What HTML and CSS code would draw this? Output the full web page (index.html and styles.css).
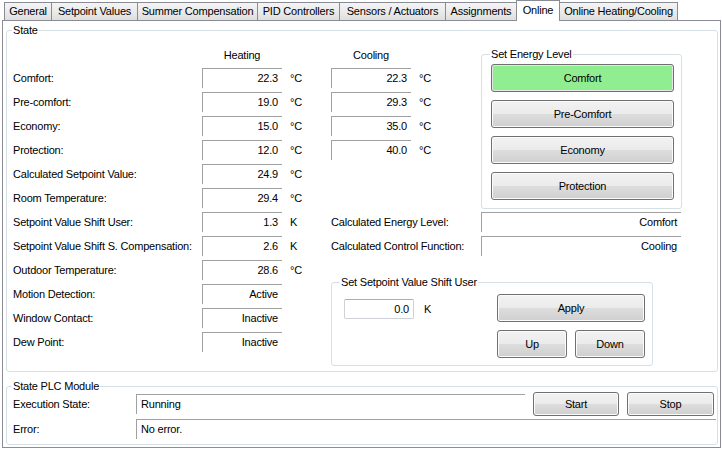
FILE: index.html
```html
<!DOCTYPE html>
<html>
<head>
<meta charset="utf-8">
<link rel="stylesheet" href="styles.css">
</head>
<body>
<div class="tabstrip">
  <div class="tab">General</div>
  <div class="tab">Setpoint Values</div>
  <div class="tab">Summer Compensation</div>
  <div class="tab">PID Controllers</div>
  <div class="tab">Sensors / Actuators</div>
  <div class="tab">Assignments</div>
  <div class="tab active">Online</div>
  <div class="tab">Online Heating/Cooling</div>
</div>
<div class="panel">
  <fieldset class="group state">
    <legend>State</legend>
    <div class="state-body">
      <div class="left">
        <div></div><div class="head">Heating</div><div></div>
        <div class="lbl">Comfort:</div><div class="val">22.3</div><div class="unit">°C</div>
        <div class="lbl">Pre-comfort:</div><div class="val">19.0</div><div class="unit">°C</div>
        <div class="lbl">Economy:</div><div class="val">15.0</div><div class="unit">°C</div>
        <div class="lbl">Protection:</div><div class="val">12.0</div><div class="unit">°C</div>
        <div class="lbl">Calculated Setpoint Value:</div><div class="val">24.9</div><div class="unit">°C</div>
        <div class="lbl">Room Temperature:</div><div class="val">29.4</div><div class="unit">°C</div>
        <div class="lbl">Setpoint Value Shift User:</div><div class="val">1.3</div><div class="unit">K</div>
        <div class="lbl">Setpoint Value Shift S. Compensation:</div><div class="val">2.6</div><div class="unit">K</div>
        <div class="lbl">Outdoor Temperature:</div><div class="val">28.6</div><div class="unit">°C</div>
        <div class="lbl">Motion Detection:</div><div class="val">Active</div><div></div>
        <div class="lbl">Window Contact:</div><div class="val">Inactive</div><div></div>
        <div class="lbl">Dew Point:</div><div class="val">Inactive</div><div></div>
      </div>
      <div class="right">
        <div class="top">
          <div class="cool">
            <div class="head">Cooling</div><div></div>
            <div class="val">22.3</div><div class="unit">°C</div>
            <div class="val">29.3</div><div class="unit">°C</div>
            <div class="val">35.0</div><div class="unit">°C</div>
            <div class="val">40.0</div><div class="unit">°C</div>
          </div>
          <fieldset class="group energy">
            <legend>Set Energy Level</legend>
            <div class="energy-btns">
              <div class="btn on">Comfort</div>
              <div class="btn">Pre-Comfort</div>
              <div class="btn">Economy</div>
              <div class="btn">Protection</div>
            </div>
          </fieldset>
        </div>
        <div class="calc first"><div class="lbl">Calculated Energy Level:</div><div class="val wide">Comfort</div></div>
        <div class="calc"><div class="lbl">Calculated Control Function:</div><div class="val wide">Cooling</div></div>
        <fieldset class="group shift">
          <legend>Set Setpoint Value Shift User</legend>
          <div class="shift-body">
            <div class="shift-input">
              <div class="tb">0.0</div><div class="k">K</div>
            </div>
            <div class="shift-btns">
              <div class="btn">Apply</div>
              <div class="updown">
                <div class="btn">Up</div>
                <div class="btn">Down</div>
              </div>
            </div>
          </div>
        </fieldset>
      </div>
    </div>
  </fieldset>
  <fieldset class="group plc">
    <legend>State PLC Module</legend>
    <div class="plc-row r1">
      <div class="lbl">Execution State:</div>
      <div class="val run">Running</div>
      <div class="btn start">Start</div>
      <div class="btn stop">Stop</div>
    </div>
    <div class="plc-row r2">
      <div class="lbl">Error:</div>
      <div class="val err">No error.</div>
    </div>
  </fieldset>
</div>
</body>
</html>
```
FILE: styles.css
```css
body {
  margin: 0;
  width: 722px;
  height: 450px;
  overflow: hidden;
  background: #fff;
  color: #000;
  font: 11px "Liberation Sans", Arial, sans-serif;
  letter-spacing: -0.2px;
}

.tabstrip {
  display: flex;
  align-items: flex-end;
  height: 20px;
  padding-left: 4px;
  position: relative;
  z-index: 1;
}
.tab {
  box-sizing: border-box;
  height: 18px;
  border: 1px solid #898c95;
  border-bottom: 0;
  margin-right: -1px;
  background: linear-gradient(#f4f4f4, #ebebeb 50%, #dedede);
  text-align: center;
  line-height: 16px;
  white-space: nowrap;
}
.tab:nth-child(1) { width: 48px; }
.tab:nth-child(2) { width: 87px; }
.tab:nth-child(3) { width: 121px; }
.tab:nth-child(4) { width: 83px; }
.tab:nth-child(5) { width: 107px; }
.tab:nth-child(6) { width: 72px; }
.tab:nth-child(7) { width: 44px; }
.tab:nth-child(8) { width: 119px; }
.tab.active {
  height: 21px;
  margin-bottom: -1px;
  background: #fff;
  line-height: 18px;
}

.panel {
  box-sizing: border-box;
  width: 719px;
  height: 428px;
  margin-left: 2px;
  border: 1px solid #898c95;
  padding: 2px 0 0 3px;
}

.group {
  box-sizing: border-box;
  margin: 0;
  min-width: 0;
  border: 1px solid #d5dfe5;
  border-radius: 3px;
  padding: 0;
}
.group legend {
  padding: 0 1px;
  margin-left: -1px;
  line-height: 14px;
}

.state {
  width: 712px;
  height: 349px;
  padding: 7px 0 0 6px;
}
.state-body { display: flex; }

.left {
  width: 318px;
  display: grid;
  grid-template-columns: 189px 80px auto;
  grid-auto-rows: 20px;
  row-gap: 4px;
  align-content: start;
}
.head { text-align: center; line-height: 22px; }
.lbl { line-height: 21px; white-space: nowrap; }
.val {
  box-sizing: border-box;
  height: 20px;
  border-top: 1px solid #a0a0a0;
  border-left: 1px solid #a0a0a0;
  text-align: right;
  padding-right: 4px;
  line-height: 19px;
  white-space: nowrap;
  overflow: hidden;
}
.unit { padding-left: 8px; line-height: 20px; }

.right { width: 386px; }
.top {
  display: flex;
  align-items: flex-start;
  height: 165px;
}
.cool {
  width: 150px;
  display: grid;
  grid-template-columns: 80px 70px;
  grid-auto-rows: 20px;
  row-gap: 4px;
}
.energy {
  width: 201px;
  height: 162px;
  margin-top: 3px;
  padding: 3px 0 0 9px;
}
.energy-btns {
  display: flex;
  flex-direction: column;
  gap: 8px;
}
.energy .btn { width: 183px; }

.btn {
  box-sizing: border-box;
  height: 28px;
  border: 1px solid #707070;
  border-radius: 3px;
  background: linear-gradient(#f2f2f2, #ebebeb 50%, #dddddd 51%, #cfcfcf);
  box-shadow: inset 0 0 0 1px #fbfbfb;
  display: flex;
  align-items: center;
  justify-content: center;
  white-space: nowrap;
}
.btn.on {
  background: #90ee90;
  box-shadow: inset 0 0 0 1px #e6e6e6;
}

.calc { display: flex; height: 20px; margin-top: 4px; }
.calc.first { margin-top: 3px; }
.calc .lbl { width: 150px; }
.calc .wide { width: 200px; }

.shift {
  width: 322px;
  height: 91px;
  margin-top: 19px;
  padding: 5px 7px 0 12px;
}
.shift legend { margin-left: -4px; }
.shift-body { display: flex; justify-content: space-between; }
.shift-input { display: flex; align-items: flex-start; margin-top: 5px; }
.tb {
  box-sizing: border-box;
  width: 70px;
  height: 20px;
  border: 1px solid #cdd0d6;
  border-top-color: #abadb3;
  border-radius: 2px;
  text-align: right;
  padding-right: 4px;
  line-height: 18px;
}
.k { margin-left: 10px; line-height: 20px; }
.shift-btns {
  width: 148px;
  display: flex;
  flex-direction: column;
  gap: 8px;
}
.updown { display: flex; gap: 8px; }
.updown .btn { width: 70px; }

.plc {
  width: 712px;
  height: 66px;
  margin-top: 7px;
  padding: 0 0 0 6px;
}
.plc legend { margin-bottom: -1px; }
.plc-row { display: flex; align-items: center; }
.plc-row .lbl { width: 123px; }
.plc-row.r1 { height: 24px; }
.plc-row.r2 { height: 20px; margin-top: 3px; }
.plc-row.r2 .lbl { line-height: 24px; }
.run { width: 389px; text-align: left; padding-left: 4px; }
.err { width: 580px; text-align: left; padding-left: 4px; }
.start { width: 86px; height: 24px; margin-left: 8px; }
.stop { width: 87px; height: 24px; margin-left: 8px; }
```
